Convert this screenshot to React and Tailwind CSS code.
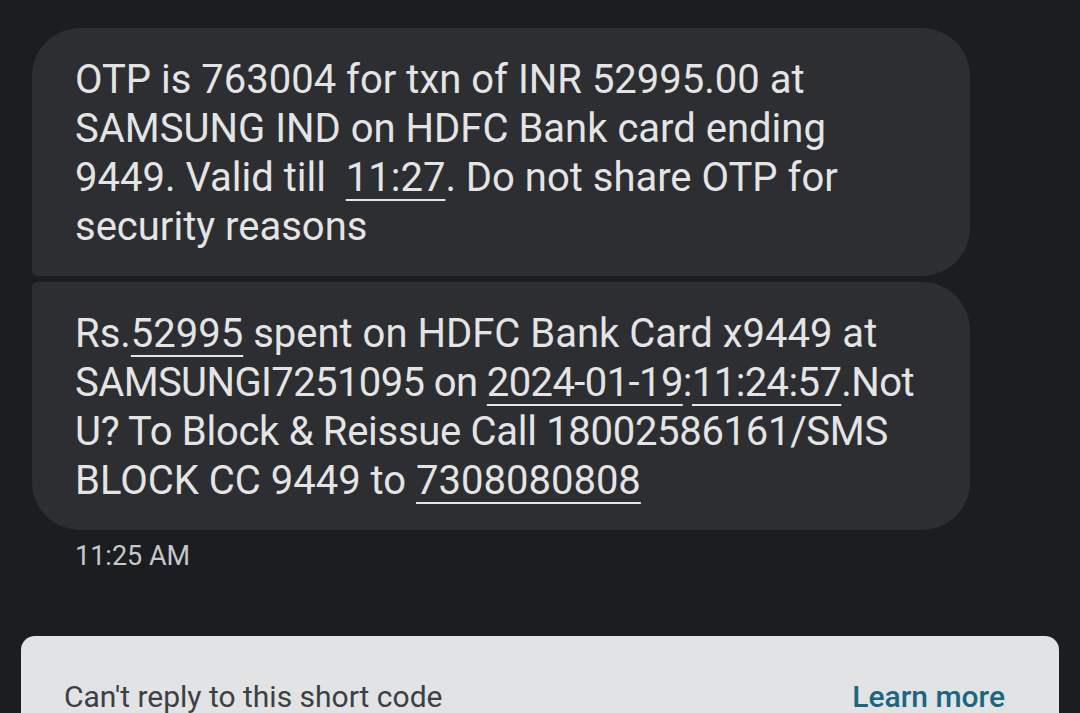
const link = "underline decoration-2 underline-offset-[8px]";

function Bubble({ children, shape }) {
    return (
        <div
            className={`w-[938px] bg-[#2c2e31] pl-[43px] pr-8 pt-[27px] pb-[25px] text-[40px] leading-[49px] text-[#e4e4e4] whitespace-nowrap ${shape}`}
        >
            {children}
        </div>
    );
}

export default function App() {
    return (
        <div
            className="w-full h-[713px] overflow-hidden bg-[#1b1d20]"
            style={{ fontFamily: "Roboto, 'Liberation Sans', sans-serif" }}
        >
            <div className="flex flex-col gap-[6px] pt-[28px] pl-[32px]">
                <Bubble shape="rounded-[48px] rounded-bl-[5px]">
                    <div>OTP is 763004 for txn of INR 52995.00 at</div>
                    <div>SAMSUNG IND on HDFC Bank card ending</div>
                    <div>
                        9449. Valid till&nbsp; <span className={link}>11:27</span>. Do not share OTP for
                    </div>
                    <div>security reasons</div>
                </Bubble>

                <Bubble shape="rounded-[48px] rounded-tl-[5px]">
                    <div>
                        Rs.<span className={link}>52995</span> spent on HDFC Bank Card x9449 at
                    </div>
                    <div className="tracking-[-0.6px]">
                        SAMSUNGI7251095 on <span className={link}>2024-01-19</span>:<span className={link}>11:24:57</span>.Not
                    </div>
                    <div className="tracking-[-0.3px]">U? To Block &amp; Reissue Call 18002586161/SMS</div>
                    <div>
                        BLOCK CC 9449 to <span className={link}>7308080808</span>
                    </div>
                </Bubble>
            </div>

            <p className="pl-[75px] mt-[10px] text-[27px] leading-[32px] text-[#c6c8cb]">
                11:25 AM
            </p>

            <div className="ml-[21px] mt-[64px] w-[1038px] h-[140px] rounded-t-[14px] bg-[#e1e3e5] pl-[43px] pr-[54px] pt-[44px]">
                <div className="flex justify-between items-baseline text-[30px] leading-[34px]">
                    <span className="text-[#3d4043]">Can't reply to this short code</span>
                    <span className="text-[#1b6681] font-medium">Learn more</span>
                </div>
            </div>
        </div>
    );
}
